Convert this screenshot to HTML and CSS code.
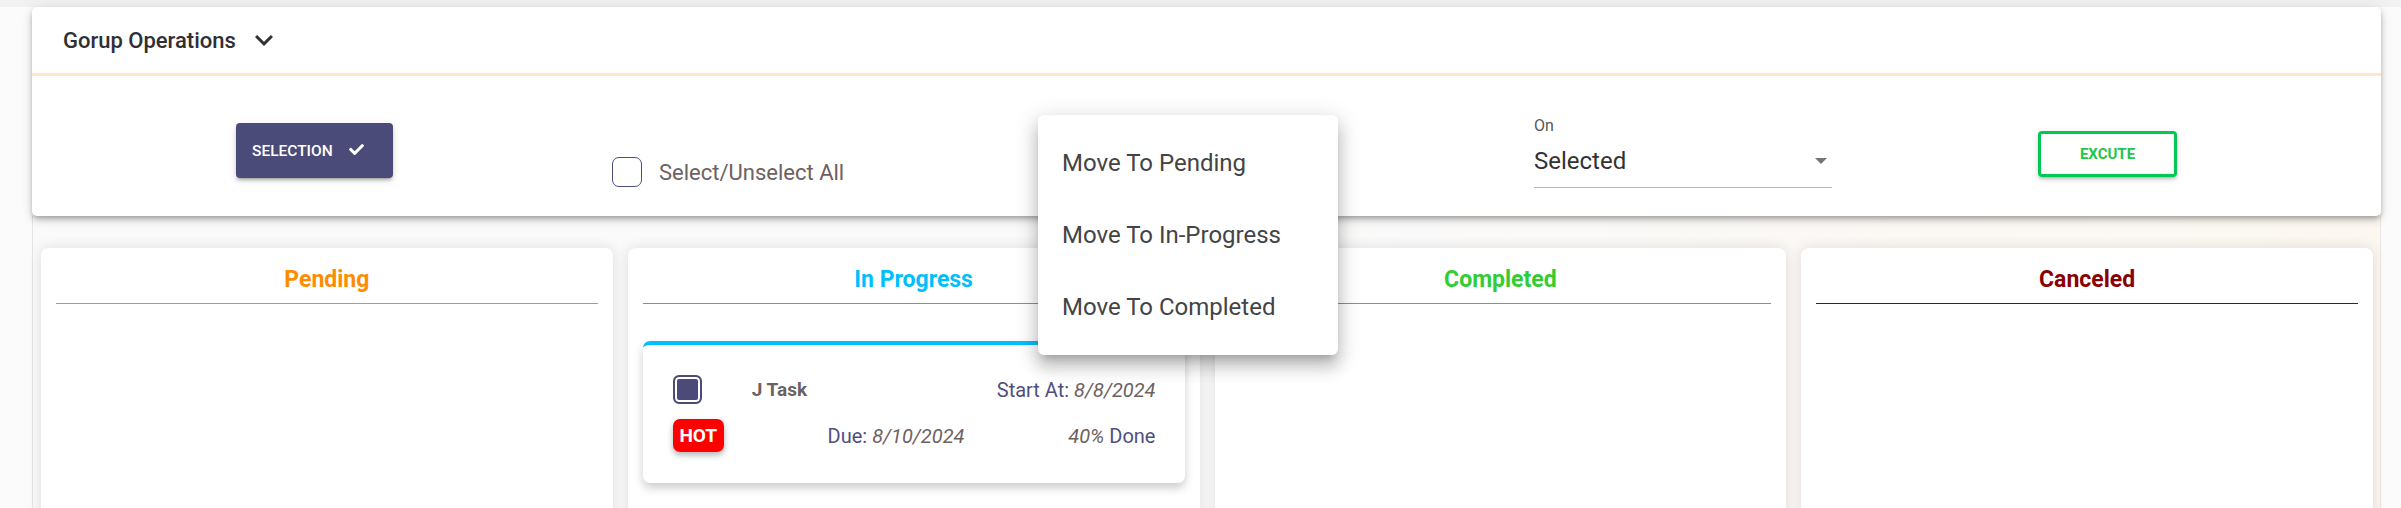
FILE: index.html
```html
<!DOCTYPE html>
<html lang="en">
<head>
<meta charset="utf-8">
<title>Group Operations</title>
<link rel="stylesheet" href="styles.css">
</head>
<body>
<div class="page">
  <section class="ops">
    <div class="ops-head">
      <span class="ops-title">Gorup Operations</span>
      <svg class="chev" viewBox="0 0 24 24"><path d="M16.59 8.59 12 13.17 7.41 8.59 6 10l6 6 6-6z"/></svg>
    </div>
    <div class="ops-body">
      <button class="sel-btn"><span>SELECTION</span><svg viewBox="0 64 512 384"><path d="M173.898 439.404l-166.4-166.4c-9.997-9.997-9.997-26.206 0-36.204l36.203-36.204c9.997-9.998 26.207-9.998 36.204 0L192 312.69 432.095 72.596c9.997-9.997 26.207-9.997 36.204 0l36.203 36.204c9.997 9.997 9.997 26.206 0 36.204l-294.4 294.401c-9.998 9.997-26.207 9.997-36.204-.001z"/></svg></button>
      <label class="select-all"><span class="cbox"></span><span>Select/Unselect All</span></label>
      <div class="move-field">
        <ul class="menu">
          <li>Move To Pending</li>
          <li>Move To In-Progress</li>
          <li>Move To Completed</li>
        </ul>
      </div>
      <div class="on-field">
        <span class="on-label">On</span>
        <div class="on-select"><span>Selected</span><svg class="drop" viewBox="0 0 12 6"><path d="M0 0h12L6 6z"/></svg></div>
      </div>
      <button class="exec-btn">EXCUTE</button>
    </div>
  </section>
  <section class="board">
    <div class="col">
      <h3 class="col-title pending">Pending</h3>
    </div>
    <div class="col">
      <h3 class="col-title progress">In Progress</h3>
      <div class="task">
        <div class="task-row">
          <span class="cbox checked"></span>
          <span class="task-name">J Task</span>
          <span class="task-start"><span class="lbl">Start At: </span><em>8/8/2024</em></span>
        </div>
        <div class="task-row row2">
          <span class="hot">HOT</span>
          <span class="task-due"><span class="lbl">Due: </span><em>8/10/2024</em></span>
          <span class="task-done"><em>40%</em><span class="lbl"> Done</span></span>
        </div>
      </div>
    </div>
    <div class="col">
      <h3 class="col-title completed">Completed</h3>
    </div>
    <div class="col">
      <h3 class="col-title canceled">Canceled</h3>
    </div>
  </section>
</div>
</body>
</html>
```

FILE: styles.css
```css
* { box-sizing: border-box; }
html, body { margin: 0; }
body {
  background: linear-gradient(#f1f1f1 0, #f1f1f1 7px, #fbfbfb 7px);
  font-family: Roboto, "Noto Sans", Arial, sans-serif;
  overflow: hidden;
  height: 508px;
}
.page { padding: 7px 20px 0 32px; }

/* operations card */
.ops {
  position: relative;
  z-index: 1;
  background: #fff;
  border-radius: 5px;
  box-shadow: 0 3px 5px -1px rgba(0,0,0,.25), 0 5px 8px 0 rgba(0,0,0,.12), 0 1px 14px 0 rgba(0,0,0,.08);
}
.ops-head {
  height: 69px;
  display: flex;
  align-items: center;
  padding-left: 31px;
  border-bottom: 3px solid #fde8ca;
}
.ops-title { font-size: 22px; font-weight: 500; color: #2f2f35; }
.chev { width: 36px; height: 36px; margin-left: 10px; fill: #333; }

.ops-body { display: flex; align-items: flex-start; height: 140px; }

.sel-btn {
  margin: 47px 0 0 204px;
  width: 157px;
  height: 55px;
  background: #4b4b7a;
  color: #fff;
  border: 0;
  border-radius: 4px;
  display: flex;
  align-items: center;
  gap: 16px;
  padding: 0 0 0 16px;
  font-family: Roboto, Arial, sans-serif;
  font-size: 15.5px;
  font-weight: 500;
  box-shadow: 0 4px 2px -3px rgba(0,0,0,.2), 0 3px 3px 0 rgba(0,0,0,.14), 0 2px 8px 0 rgba(0,0,0,.12);
}
.sel-btn svg { width: 15px; height: 11.25px; fill: #fff; margin-top: -2px; }

.select-all {
  margin: 81px 0 0 219px;
  width: 230px;
  display: flex;
  align-items: center;
  gap: 17px;
  font-size: 22px;
  color: #6d6161;
  white-space: nowrap;
}
.cbox {
  display: block;
  flex: none;
  width: 30px;
  height: 30px;
  border: 1.5px solid #4b4b7a;
  border-radius: 7px;
  background: #fff;
}
.cbox.checked {
  width: 29px;
  height: 29px;
  border-width: 2px;
  border-radius: 6px;
  background: #4b4b7a;
  box-shadow: inset 0 0 0 2px #fff;
}

.move-field { position: relative; flex: none; width: 300px; margin-left: 196px; align-self: stretch; }
.menu {
  position: absolute;
  top: 39px;
  left: 0;
  width: 300px;
  margin: 0;
  padding: 12px 0;
  list-style: none;
  background: #fff;
  border-radius: 6px;
  box-shadow: 0 8px 8px -5px rgba(0,0,0,.2), 0 12px 15px 2px rgba(0,0,0,.14), 0 5px 21px 4px rgba(0,0,0,.12);
}
.menu li {
  height: 72px;
  display: flex;
  align-items: center;
  padding: 0 24px;
  font-size: 24px;
  color: #444;
  white-space: nowrap;
}

.on-field { margin: 40px 0 0 196px; flex: none; width: 298px; display: flex; flex-direction: column; }
.on-label { font-size: 16px; line-height: 19px; color: #555; }
.on-select {
  margin-top: 8px;
  display: flex;
  align-items: center;
  justify-content: space-between;
  font-size: 24px;
  line-height: 36px;
  padding: 0 5px 8px 0;
  border-bottom: 1px solid #b8b8b8;
  color: #333;
}
.drop { width: 12px; height: 6px; fill: #757575; }

.exec-btn {
  margin: 55px 0 0 206px;
  flex: none;
  width: 139px;
  height: 46px;
  border: 3px solid #00c853;
  border-radius: 4px;
  background: #fff;
  color: #1ec64a;
  font-family: Roboto, Arial, sans-serif;
  font-size: 15px;
  font-weight: 700;
  box-shadow: 0 4px 2px -3px rgba(0,0,0,.15), 0 3px 3px 0 rgba(0,0,0,.1), 0 2px 8px 0 rgba(0,0,0,.1);
}

/* board */
.board {
  display: grid;
  grid-template-columns: repeat(4, 1fr);
  gap: 15px;
  padding: 32px 7px 0 8px;
  background: linear-gradient(90deg, #fafafa 55%, #fcf7f0 100%);
  border-left: 1px solid #e4e4e4;
  border-right: 1px solid #ebe7e2;
  min-height: 320px;
}
.col {
  background: #fff;
  border-radius: 8px;
  box-shadow: 0 0 14px rgba(0,0,0,.12);
  padding: 0 15px;
  min-height: 320px;
}
.col-title {
  margin: 0;
  padding: 18px 0 10px;
  text-align: center;
  font-size: 23px;
  line-height: 27px;
  font-weight: 700;
  border-bottom: 1px solid;
}
.pending { color: #ff8c00; }
.progress { color: #00bfff; }
.completed { color: #32cd32; }
.canceled { color: #8b0000; }

.task {
  margin-top: 37px;
  border-top: 4px solid #00bfff;
  border-radius: 7px;
  background: #fff;
  box-shadow: 0 5px 10px rgba(0,0,0,.2);
  padding: 30px 29px 31px 30px;
}
.task-row { display: flex; align-items: center; font-size: 20px; }
.task-row em { color: #6d6262; }
.lbl { color: #4f4f7e; }
.task-name { margin-left: 50px; font-size: 19px; font-weight: 700; color: #6d6262; }
.task-start { margin-left: auto; }
.row2 { margin-top: 15px; justify-content: space-between; }
.hot {
  width: 51px;
  height: 33px;
  display: flex;
  align-items: center;
  justify-content: center;
  background: #ff0000;
  color: #fff;
  border-radius: 7px;
  font-size: 19px;
  font-weight: 700;
  box-shadow: 0 3px 6px rgba(0,0,0,.3);
}
```
